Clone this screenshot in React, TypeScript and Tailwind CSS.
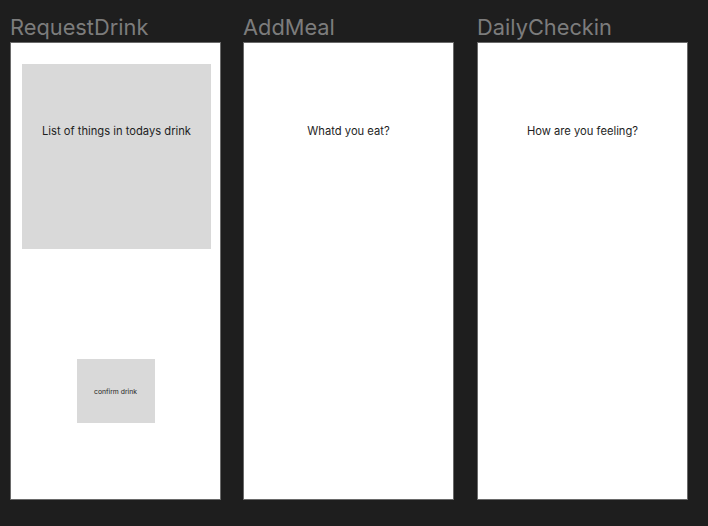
import React from "react";

const font = { fontFamily: "Inter, 'Noto Sans', sans-serif" };

function Column({ title, className, children }: { title: string; className?: string; children: React.ReactNode }) {
  return (
    <div className={"flex flex-col w-[211px] shrink-0 " + (className ?? "")}>
      <div className="h-[26px] leading-[26px] text-[21.8px] text-[#7c7c7c] mb-[2px] whitespace-nowrap">
        {title}
      </div>
      <div className="h-[458px] bg-white border border-[#6a6a6a] flex flex-col">{children}</div>
    </div>
  );
}

export default function App() {
  return (
    <div style={font} className="w-[708px] h-[526px] bg-[#1e1e1e] pt-[14px] pl-[10px] flex overflow-hidden">
      <Column title="RequestDrink">
        <div className="mt-[21px] ml-[11px] w-[189px] h-[185px] bg-[#d9d9d9] flex flex-col items-center pt-[60px]">
          <div className="text-[11.2px] leading-[15px] text-[#1e1e1e] whitespace-nowrap">List of things in todays drink</div>
        </div>
        <div className="mt-[110px] self-center w-[78px] h-[64px] bg-[#d9d9d9] flex items-center justify-center">
          <div className="text-[6.8px] leading-[9px] text-[#1e1e1e] whitespace-nowrap">confirm drink</div>
        </div>
      </Column>
      <Column title="AddMeal" className="ml-[22px]">
        <div className="pt-[81px] text-center text-[11.2px] leading-[15px] text-[#1e1e1e]">Whatd you eat?</div>
      </Column>
      <Column title="DailyCheckin" className="ml-[23px]">
        <div className="pt-[81px] text-center text-[11.2px] leading-[15px] text-[#1e1e1e]">How are you feeling?</div>
      </Column>
    </div>
  );
}
